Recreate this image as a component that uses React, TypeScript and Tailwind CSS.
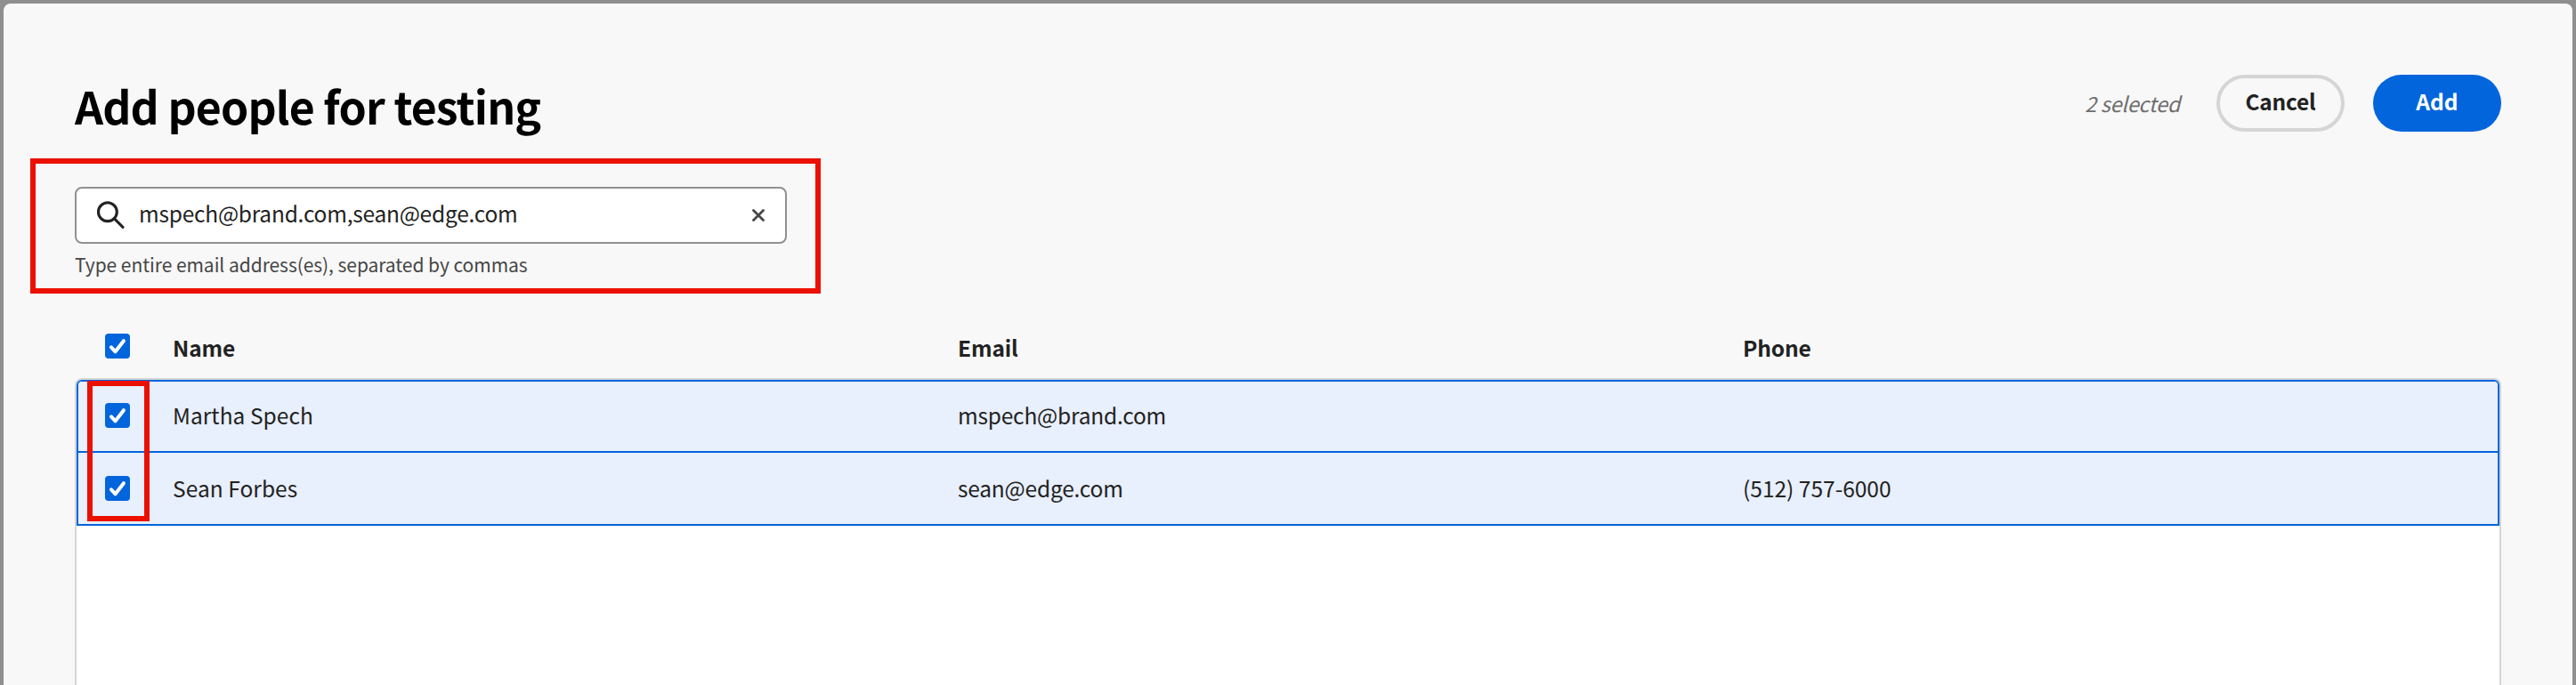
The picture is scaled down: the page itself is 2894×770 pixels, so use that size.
type Person = { name: string; email: string; phone: string };

const people: Person[] = [
  { name: "Martha Spech", email: "mspech@brand.com", phone: "" },
  { name: "Sean Forbes", email: "sean@edge.com", phone: "(512) 757-6000" },
];

function Checkbox() {
  return (
    <span className="flex size-7 shrink-0 rounded-[4px] bg-[#0265dc]">
      <svg viewBox="0 0 28 28" className="size-7" fill="none">
        <path
          d="M7 15.3 L11.6 20.3 L20.9 8.2"
          stroke="#fff"
          strokeWidth="4"
          strokeLinecap="round"
          strokeLinejoin="round"
        />
      </svg>
    </span>
  );
}

function SearchIcon() {
  return (
    <svg viewBox="0 0 32 32" className="size-8 shrink-0" fill="none" stroke="#222" strokeWidth="3.1">
      <circle cx="12.9" cy="12.2" r="10.4" />
      <path d="M20.3 19.6 L30 29.3" strokeLinecap="round" />
    </svg>
  );
}

function ClearIcon() {
  return (
    <svg viewBox="0 0 14 14" className="size-3.5 shrink-0" fill="none" stroke="#464646" strokeWidth="2.8">
      <path d="M1.5 1.5 L12.5 12.5 M12.5 1.5 L1.5 12.5" strokeLinecap="round" />
    </svg>
  );
}

export default function App() {
  return (
    <div
      className="h-[770px] w-[2894px] overflow-hidden bg-[#8f8f8f] px-1 pt-1 text-[#222]"
      style={{ fontFamily: '"Noto Sans CJK JP", "Noto Sans", sans-serif' }}
    >
      <div className="flex h-full flex-col rounded-t-lg bg-[#f8f8f8] px-20 pt-20">
        <header className="flex h-[94px] items-start justify-between">
          <h1 className="mt-[2px] text-[50px] leading-[64px] font-bold tracking-[-0.85px] text-black">
            Add people for testing
          </h1>
          <div className="flex items-center">
            <span className="mr-[41px] pb-[1px] text-[23.5px] leading-[32px] tracking-[-0.3px] text-[#6e6e6e] italic">
              2 selected
            </span>
            <button className="mr-8 flex h-16 w-36 items-center justify-center rounded-full border-4 border-[#d5d5d5] pb-1 text-[24.5px] leading-[32px] font-bold tracking-[-0.2px]">
              Cancel
            </button>
            <button className="flex h-16 w-36 items-center justify-center rounded-full bg-[#0265dc] pb-1 text-[24.5px] leading-[32px] font-bold text-white">
              Add
            </button>
          </div>
        </header>

        <section className="-ml-[50px] h-[152px] w-[888px] border-[6px] border-[#eb1000] pt-[26px] pl-11">
          <div className="flex h-16 w-[800px] items-center rounded-lg border-2 border-[#909090] bg-white pr-[23px] pl-[22px]">
            <SearchIcon />
            <span className="ml-4 flex-1 pb-1 text-[24.5px] leading-[32px] tracking-[-0.23px]">
              mspech@brand.com,sean@edge.com
            </span>
            <ClearIcon />
          </div>
          <p className="mt-[9px] text-[21px] leading-[28px] tracking-[-0.05px] text-[#464646]">
            Type entire email address(es), separated by commas
          </p>
        </section>

        <div className="mt-[33px] flex h-[62px] shrink-0 items-start pt-3 pl-[34px] text-[24.5px] leading-[32px] font-bold tracking-[-0.15px]">
          <Checkbox />
          <div className="ml-12 w-[882px]">Name</div>
          <div className="w-[882px]">Email</div>
          <div>Phone</div>
        </div>

        <div className="relative w-[2726px] grow rounded-t-lg border-2 border-b-0 border-[#d5d5d5] bg-white">
          <div className="overflow-hidden rounded-t-md border-2 border-b-0 border-[#0265dc] text-[24.5px] leading-[32px]">
            {people.map((p, i) => (
              <div
                key={p.name}
                className={
                  i === 0
                    ? "flex h-20 items-center border-b-2 border-[#0265dc] bg-[#e8effd] pb-[2px] pl-[30px]"
                    : "flex h-[82px] items-center border-b-2 border-[#0265dc] bg-[#e8effd] pl-[30px]"
                }
              >
                <Checkbox />
                <div className="ml-12 w-[882px] tracking-[0.05px]">{p.name}</div>
                <div className="w-[882px] tracking-[-0.2px]">{p.email}</div>
                <div>{p.phone}</div>
              </div>
            ))}
          </div>
          <div className="absolute top-[1px] left-3 h-[158px] w-[70px] border-[6px] border-[#eb1000]" />
        </div>
      </div>
    </div>
  );
}
